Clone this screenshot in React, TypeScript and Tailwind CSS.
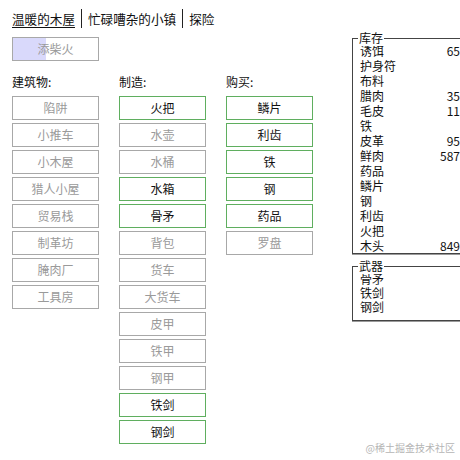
import React from "react";

const build = ["陷阱", "小推车", "小木屋", "猎人小屋", "贸易栈", "制革坊", "腌肉厂", "工具房"];
const craft: [string, boolean][] = [
  ["火把", true],
  ["水壶", false],
  ["水桶", false],
  ["水箱", true],
  ["骨矛", true],
  ["背包", false],
  ["货车", false],
  ["大货车", false],
  ["皮甲", false],
  ["铁甲", false],
  ["钢甲", false],
  ["铁剑", true],
  ["钢剑", true],
];
const buy: [string, boolean][] = [
  ["鳞片", true],
  ["利齿", true],
  ["铁", true],
  ["钢", true],
  ["药品", true],
  ["罗盘", false],
];
const stores: [string, string][] = [
  ["诱饵", "65"],
  ["护身符", ""],
  ["布料", ""],
  ["腊肉", "35"],
  ["毛皮", "11"],
  ["铁", ""],
  ["皮革", "95"],
  ["鲜肉", "587"],
  ["药品", ""],
  ["鳞片", ""],
  ["钢", ""],
  ["利齿", ""],
  ["火把", ""],
  ["木头", "849"],
];
const weapons = ["骨矛", "铁剑", "钢剑"];

function Btn({ label, on }: { label: string; on: boolean }) {
  return (
    <div
      className={
        on
          ? "w-[87px] h-[24px] mb-[3px] border border-[#5fae5f] text-[#111] text-[12px] flex items-center justify-center"
          : "w-[87px] h-[24px] mb-[3px] border border-[#a8a8a8] text-[#9a9a9a] text-[12px] flex items-center justify-center"
      }
    >
      {label}
    </div>
  );
}

function Column({ title, items }: { title: string; items: [string, boolean][] }) {
  return (
    <div className="w-[87px] flex flex-col">
      <div className="h-[23px] text-[12px] text-[#111] leading-[16px] pt-[1px]">{title}</div>
      {items.map(([l, on]) => (
        <Btn key={l} label={l} on={on} />
      ))}
    </div>
  );
}

export default function App() {
  return (
    <div
      className="relative w-[460px] h-[460px] overflow-hidden bg-white text-[#111]"
      style={{ fontFamily: '"Noto Sans CJK SC", "Noto Sans", sans-serif' }}
    >
      <div className="flex items-start">
        <div className="pl-[12px] w-[340px] shrink-0">
          {/* header */}
          <div className="flex items-center h-[19px] mt-[9px] text-[12.6px] leading-[16px]">
            <span className="underline underline-offset-[3px]">温暖的木屋</span>
            <span className="mx-[6px] h-[19px] w-px bg-[#222]" />
            <span>忙碌嘈杂的小镇</span>
            <span className="mx-[6px] h-[19px] w-px bg-[#222]" />
            <span>探险</span>
          </div>
          {/* light fire */}
          <div className="relative mt-[9px] w-[87px] h-[24px] border border-[#a8a8a8] overflow-hidden">
            <div className="absolute left-0 top-0 bottom-0 w-[33px] bg-[#d9d9fb]" />
            <div className="relative h-full flex items-center justify-center text-[12px] text-[#9a9a9a]">添柴火</div>
          </div>
          {/* columns */}
          <div className="flex gap-[20px] mt-[12px]">
            <Column title="建筑物:" items={build.map((b) => [b, false] as [string, boolean])} />
            <Column title="制造:" items={craft} />
            <Column title="购买:" items={buy} />
          </div>
        </div>
        {/* stores */}
        <div className="ml-[12px] mt-[38px] w-[120px] shrink-0 text-[12px]">
          <div className="relative border border-[#444] shadow-[0_1px_0_#9a9a9a] pt-[4px] pb-0 pl-[7px]">
            <div className="absolute -top-[9px] left-[5px] bg-white px-[1px] leading-[16px]">库存</div>
            {stores.map(([n, v]) => (
              <div key={n} className="flex justify-between h-[15px] leading-[15px] w-[100px]">
                <span>{n}</span>
                <span>{v}</span>
              </div>
            ))}
          </div>
          <div className="relative mt-[12px] border border-[#444] shadow-[0_1px_0_#9a9a9a] pt-[5px] pb-[6px] pl-[7px]">
            <div className="absolute -top-[9px] left-[5px] bg-white px-[1px] leading-[16px]">武器</div>
            {weapons.map((n) => (
              <div key={n} className="h-[14px] leading-[14px]">
                {n}
              </div>
            ))}
          </div>
        </div>
      </div>
      <div className="absolute right-[5px] bottom-[5px] text-[10px] text-[#b5b5b5]">@稀土掘金技术社区</div>
    </div>
  );
}
